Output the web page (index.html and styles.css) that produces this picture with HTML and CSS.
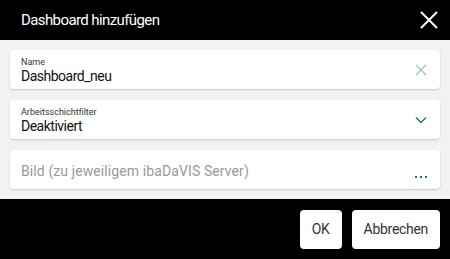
FILE: index.html
```html
<!DOCTYPE html>
<html lang="de">
<head>
  <meta charset="UTF-8" />
  <title>Dashboard hinzufügen</title>
  <link rel="stylesheet" href="styles.css">
</head>
<body>
<div class="dialog">
  <header class="dialog-head">
    <h1>Dashboard hinzufügen</h1>
    <button class="close" aria-label="Schließen">
      <svg width="20" height="20" viewBox="0 0 20 20"><path d="M2 2L18 18M18 2L2 18" stroke="#fff" stroke-width="2" fill="none"/></svg>
    </button>
  </header>

  <div class="dialog-body">
    <div class="field">
      <div class="field-text">
        <label>Name</label>
        <div class="value">Dashboard_neu</div>
      </div>
      <svg class="icon" width="12" height="12" viewBox="0 0 12 12"><path d="M1 1L11 11M11 1L1 11" stroke="#8cc9b9" stroke-width="1.3" fill="none"/></svg>
    </div>
    <div class="field">
      <div class="field-text">
        <label>Arbeitsschichtfilter</label>
        <div class="value">Deaktiviert</div>
      </div>
      <svg class="icon" width="12" height="8" viewBox="0 0 12 8"><path d="M1 1.5L6 6.5L11 1.5" stroke="#1f7a66" stroke-width="1.4" fill="none"/></svg>
    </div>
    <div class="field">
      <div class="field-text">
        <div class="placeholder">Bild (zu jeweiligem ibaDaVIS Server)</div>
      </div>
      <span class="dots"><i></i><i></i><i></i></span>
    </div>
  </div>

  <footer class="dialog-foot">
    <button class="btn">OK</button>
    <button class="btn">Abbrechen</button>
  </footer>
</div>
</body>
</html>
```

FILE: styles.css
```css
body { margin: 0; font-family: Roboto, "Liberation Sans", sans-serif; color: #111; }
.dialog { width: 450px; height: 259px; display: flex; flex-direction: column; background: #000; }
.dialog-head { height: 40px; display: flex; align-items: center; justify-content: space-between; padding: 0 11px 0 21px; }
.dialog-head h1 { margin: 0; font-size: 15px; font-weight: 400; color: #fff; letter-spacing: -0.6px; }
.close { background: none; border: none; padding: 0; width: 20px; height: 20px; cursor: pointer; }
.dialog-body { background: #f2f2f2; padding: 10px; display: flex; flex-direction: column; gap: 11px; height: 159px; box-sizing: border-box; }
.field { background: #fff; border-radius: 4px; height: 39px; display: flex; align-items: center; justify-content: space-between; padding: 0 13px 0 11px; box-shadow: 0 1px 2px rgba(0,0,0,0.18); }
.field-text { display: flex; flex-direction: column; }
.field label { font-size: 9px; color: #333; line-height: 11px; margin-top: 2px; }
.field .value { font-size: 14px; line-height: 17px; letter-spacing: -0.5px; }
.placeholder { font-size: 14px; color: #999; margin-top: 3px; letter-spacing: 0.1px; }
.icon { display: block; }
.dots { display: flex; gap: 3px; align-self: flex-end; margin-bottom: 11px; }
.dots i { width: 2px; height: 2px; background: #1f7a66; display: block; }
.dialog-foot { flex: 1; display: flex; justify-content: flex-end; align-items: center; gap: 10px; padding: 0 10px; }
.btn { background: #fff; border: none; border-radius: 4px; height: 39px; padding: 0 12px; font-family: inherit; font-size: 14px; color: #333; cursor: pointer; min-width: 40px; letter-spacing: -0.3px; }
```
